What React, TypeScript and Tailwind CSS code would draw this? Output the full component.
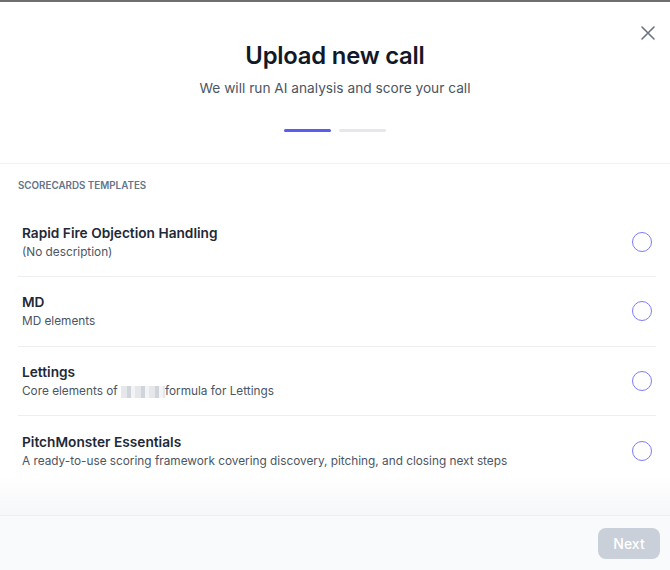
import React from "react";

const templates = [
  { title: "Rapid Fire Objection Handling", desc: <>(No description)</> },
  { title: "MD", desc: <>MD elements</> },
  {
    title: "Lettings",
    desc: (
      <>
        Core elements of{" "}
        <span className="inline-block align-middle w-[44px] h-[12px] bg-[repeating-linear-gradient(90deg,#e5e7eb_0px,#e5e7eb_6px,#d1d5db_6px,#d1d5db_10px,#f3f4f6_10px,#f3f4f6_14px)] blur-[0.6px]" />
        formula for Lettings
      </>
    ),
  },
  {
    title: "PitchMonster Essentials",
    desc: <>A ready-to-use scoring framework covering discovery, pitching, and closing next steps</>,
  },
];

export default function App() {
  return (
    <div
      className="w-[670px] h-[570px] bg-white flex flex-col overflow-hidden border-t-2 border-[#6f6f6f] relative"
      style={{ fontFamily: "Inter, 'Noto Sans', sans-serif" }}
    >
      <button className="absolute right-[10px] top-[19px] text-[#6b7280]">
        <svg width="24" height="24" viewBox="0 0 24 24" fill="none" stroke="currentColor" strokeWidth="1.6" strokeLinecap="round">
          <path d="M6 6l12 12M18 6L6 18" />
        </svg>
      </button>
      <div className="flex flex-col items-center pt-[37px] h-[162px] border-b border-[#f0f1f3] shrink-0">
        <h1 className="text-[23.8px] leading-[34px] font-semibold text-[#111827] tracking-[-0.2px]">Upload new call</h1>
        <p className="text-[13.7px] leading-[18px] text-[#4b5563] mt-[6px]">We will run AI analysis and score your call</p>
        <div className="flex gap-[8px] mt-[32px]">
          <div className="w-[47px] h-[3px] rounded-full bg-[#5b5bf0]" />
          <div className="w-[47px] h-[3px] rounded-full bg-[#e5e7eb]" />
        </div>
      </div>
      <div className="flex-1 relative overflow-hidden">
        <div className="pl-[18px] pr-[14px] pt-[15px]">
          <div className="text-[9.8px] leading-[14px] font-semibold text-[#64748b]">SCORECARDS TEMPLATES</div>
          <div className="mt-[14.5px]">
            {templates.map((t, i) => (
              <div
                key={i}
                className={`flex items-center justify-between pl-[4px] pr-[4px] h-[69.5px] ${i < templates.length - 1 ? "border-b border-[#eceef1]" : ""}`}
              >
                <div className="flex flex-col pt-[1px]">
                  <div className="text-[13.7px] leading-[19px] font-semibold text-[#1f2937]">{t.title}</div>
                  <div className="text-[11.8px] leading-[17px] text-[#4b5563] mt-[1px]">{t.desc}</div>
                </div>
                <div className="w-[20px] h-[20px] rounded-full border-[1.5px] border-[#7c7cf6]" />
              </div>
            ))}
          </div>
        </div>
        <div className="absolute left-0 right-0 bottom-0 h-[40px] bg-gradient-to-b from-white/0 to-[#f6f7f9]" />
      </div>
      <div className="h-[55px] shrink-0 border-t border-[#eceef1] bg-[#f9fafb] flex items-center justify-end pr-[10px]">
        <button className="w-[62px] h-[31px] rounded-[8px] bg-[#c9d0d9] text-white text-[14px] font-medium">Next</button>
      </div>
    </div>
  );
}
